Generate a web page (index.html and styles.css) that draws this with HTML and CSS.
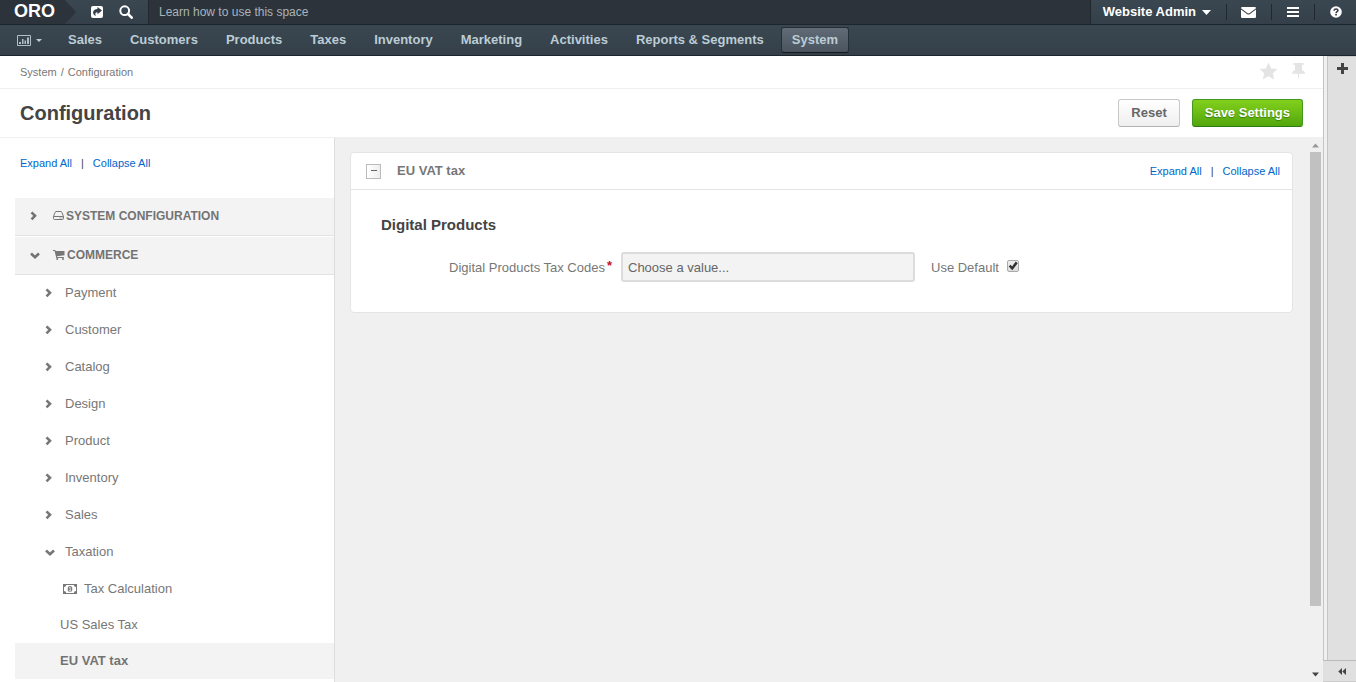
FILE: index.html
```html
<!DOCTYPE html>
<html lang="en">
<head>
<meta charset="utf-8">
<title>Configuration - System</title>
<link rel="stylesheet" href="styles.css">
</head>
<body>
<svg class="defs" aria-hidden="true">
  <symbol id="right" viewBox="0 0 10 12"><path d="M1.500 2.300 5 5.800 1.500 9.300" fill="none" stroke="currentColor" stroke-width="2.600"/></symbol>
  <symbol id="down" viewBox="0 0 10 12"><path d="M1 4.500 5 8.200 9 4.500" fill="none" stroke="currentColor" stroke-width="2.600"/></symbol>
</svg>
<header class="topbar">
  <a class="logo" href="#">ORO</a>
  <div class="tools">
    <button class="icon-btn" aria-label="Shortcuts"><svg width="12" height="12" viewBox="0 0 12 12"><rect width="12" height="12" rx="2" fill="#fff"/><path d="M6.500 1 11 4.500 6.500 8.200V6.200C4.500 6.200 3.800 7.200 4.800 10 .8 8.500 1.200 3 6.500 3z" fill="#333e48"/></svg></button>
    <button class="icon-btn" aria-label="Search"><svg width="14" height="14" viewBox="0 0 14 14" fill="none" stroke="#fff"><circle cx="5.700" cy="5.700" r="4.400" stroke-width="2"/><path d="m9 9 3.700 3.700" stroke-width="2.600" stroke-linecap="round"/></svg></button>
  </div>
  <a class="learn" href="#">Learn how to use this space</a>
  <div class="user">
    <button class="user-name">Website Admin <svg width="9" height="5" viewBox="0 0 9 5"><path d="M0 0h9L4.500 5z" fill="#fff"/></svg></button>
    <button class="user-btn mail" aria-label="Emails"><svg width="15" height="11" viewBox="0 0 15 11"><path d="M0 1.200Q0 0 1.200 0h12.600Q15 0 15 1.200L8.700 6Q7.500 6.900 6.300 6z" fill="#fff"/><path d="M0 2.600 6 7.100q1.500 1 3 0l6-4.500v7.200q0 1.200-1.200 1.200H1.200Q0 11 0 9.800z" fill="#fff"/></svg></button>
    <button class="user-btn" aria-label="Menu"><svg width="12" height="10" viewBox="0 0 12 10"><path d="M0 0h12v2H0zM0 4h12v2H0zM0 8h12v2H0z" fill="#fff"/></svg></button>
    <button class="user-btn" aria-label="Help"><svg width="12" height="12" viewBox="0 0 12 12"><circle cx="6" cy="6" r="5.800" fill="#fff"/><path d="M4 4.700C4.200 2.500 8 2.600 7.900 4.500 7.800 5.800 6.100 5.700 6.100 7.200" fill="none" stroke="#333e48" stroke-width="1.600"/><path d="M5.200 8h1.700v1.600H5.200z" fill="#333e48"/></svg></button>
  </div>
</header>
<nav class="nav">
  <a class="dash" href="#" aria-label="Dashboards"><svg width="14" height="11" viewBox="0 0 14 11"><path d="M.5.500h13v10H.5z" fill="none" stroke="#aebdc6"/><path d="M2 7h2v2H2zM5 4h1.500v5H5zM7.500 5.500H9V9H7.500zM10 2.500h2V9h-2z" fill="#aebdc6"/></svg><svg width="6" height="3" viewBox="0 0 6 3"><path d="M0 0h6L3 3z" fill="#bcccd5"/></svg></a>
  <a class="nav-link" href="#">Sales</a>
  <a class="nav-link" href="#">Customers</a>
  <a class="nav-link" href="#">Products</a>
  <a class="nav-link" href="#">Taxes</a>
  <a class="nav-link" href="#">Inventory</a>
  <a class="nav-link" href="#">Marketing</a>
  <a class="nav-link" href="#">Activities</a>
  <a class="nav-link" href="#">Reports &amp; Segments</a>
  <a class="nav-link active" href="#">System</a>
</nav>
<div class="shell">
  <main class="main">
    <div class="crumbs">
      <div class="path"><a href="#">System</a><span>/</span><span>Configuration</span></div>
      <div class="marks">
        <button class="icon-btn" aria-label="Favorite"><svg width="19" height="18" viewBox="0 0 19 18"><path d="m9.500.5 2.700 5.900 6.300.7-4.700 4.200 1.400 6.200-5.700-3.200-5.700 3.200 1.400-6.200L.5 7.100l6.300-.7z" fill="#e4e4e4"/></svg></button>
        <button class="icon-btn" aria-label="Pin"><svg width="13" height="18" viewBox="0 0 13 18"><path d="M1.500 1h10v2H10v5c2 .8 3 2 3 3.800H7.300L6.500 18l-.8-6.200H0C0 10 1 8.800 3 8V3H1.500z" fill="#e4e4e4"/></svg></button>
      </div>
    </div>
    <div class="titlebar">
      <h1>Configuration</h1>
      <button class="btn">Reset</button>
      <button class="btn save">Save Settings</button>
    </div>
    <div class="content">
      <aside class="tree">
        <div class="toggles"><a href="#">Expand All</a><span>|</span><a href="#">Collapse All</a></div>
        <a class="group" href="#"><svg class="arrow" width="10" height="12"><use href="#right"/></svg><svg width="11" height="10" viewBox="0 0 11 10"><path d="M.5 5.500 2.200 1.200Q2.400.5 3 .5h5q.6 0 .8.7l1.700 4.300v2q0 1-1 1h-8q-1 0-1-1zM.5 5.500h10M6.500 7h1M8.500 7h1" fill="none" stroke="#777"/></svg><span>SYSTEM CONFIGURATION</span></a>
        <a class="group" href="#"><svg class="arrow" width="10" height="12"><use href="#down"/></svg><svg width="12" height="10" viewBox="0 0 12 10" fill="#777"><path d="M0 0h2.200l.5 1H11.500v4.200L4 6.200l.2.900h6.600v1H3.300L1.600 1H0z"/><circle cx="4.200" cy="9" r="1"/><circle cx="10" cy="9" r="1"/></svg><span>COMMERCE</span></a>
        <a class="item" href="#"><svg width="10" height="12"><use href="#right"/></svg>Payment</a>
        <a class="item" href="#"><svg width="10" height="12"><use href="#right"/></svg>Customer</a>
        <a class="item" href="#"><svg width="10" height="12"><use href="#right"/></svg>Catalog</a>
        <a class="item" href="#"><svg width="10" height="12"><use href="#right"/></svg>Design</a>
        <a class="item" href="#"><svg width="10" height="12"><use href="#right"/></svg>Product</a>
        <a class="item" href="#"><svg width="10" height="12"><use href="#right"/></svg>Inventory</a>
        <a class="item" href="#"><svg width="10" height="12"><use href="#right"/></svg>Sales</a>
        <a class="item" href="#"><svg width="10" height="12"><use href="#down"/></svg>Taxation</a>
        <a class="leaf with-icon" href="#"><svg width="14" height="10" viewBox="0 0 14 10"><path fill-rule="evenodd" d="M0 0h14v10H0zM3.200 1Q3 2.800 1 3v4q2 .2 2.200 2h7.600q.2-1.800 2.200-2V3Q11 2.800 10.800 1z" fill="#777"/><ellipse cx="7" cy="5" rx="2.300" ry="2.900" fill="#777"/><path d="m6.200 3.800 1-.6v3.500M6 6.900h2.200" fill="none" stroke="#fff" stroke-width=".8"/></svg>Tax Calculation</a>
        <a class="leaf" href="#">US Sales Tax</a>
        <a class="leaf current" href="#">EU VAT tax</a>
      </aside>
      <div class="work">
        <section class="card">
          <div class="card-head">
            <button class="collapse" aria-label="Collapse section"></button>
            <h2>EU VAT tax</h2>
            <div class="toggles"><a href="#">Expand All</a><span>|</span><a href="#">Collapse All</a></div>
          </div>
          <div class="card-body">
            <h3>Digital Products</h3>
            <div class="field">
              <label class="name" for="codes">Digital Products Tax Codes<em>*</em></label>
              <input class="codes" id="codes" type="text" placeholder="Choose a value..." disabled>
              <label for="def">Use Default</label>
              <input class="check" id="def" type="checkbox" checked>
            </div>
          </div>
        </section>
        <div class="scroll" aria-hidden="true">
          <svg width="7" height="5" viewBox="0 0 7 5"><path d="M0 4.500 3.500.5 7 4.500z" fill="#999"/></svg>
          <div class="track"><div class="thumb"></div></div>
          <svg width="7" height="5" viewBox="0 0 7 5"><path d="M0 .5h7L3.500 4.500z" fill="#444"/></svg>
        </div>
      </div>
    </div>
  </main>
  <aside class="side">
    <div class="side-main"><button class="icon-btn" aria-label="Add widget"><svg width="11" height="11" viewBox="0 0 11 11"><path d="M4 0h3v4h4v3H7v4H4V7H0V4h4z" fill="#444"/></svg></button></div>
    <div class="side-foot"><button class="icon-btn" aria-label="Expand sidebar"><svg width="8" height="7" viewBox="0 0 8 7"><path d="M4 0v7L.3 3.500zM8 0v7L4.300 3.500z" fill="#444"/></svg></button></div>
  </aside>
</div>
</body>
</html>
```
FILE: styles.css
```css
* { box-sizing: border-box; }
body {
  margin: 0;
  height: 100vh;
  display: flex;
  flex-direction: column;
  overflow: hidden;
  font: 13px/18px "Liberation Sans", Arial, sans-serif;
  color: #777;
  background: #fff;
}
a { text-decoration: none; color: inherit; }
button { font: inherit; color: inherit; cursor: pointer; }
svg { flex: none; display: block; }
h1, h2, h3 { margin: 0; }
.defs { display: none; }
.icon-btn, .user-name, .user-btn { border: 0; padding: 0; background: none; display: flex; align-items: center; }

.topbar { flex: none; height: 25px; display: flex; background: #2c333b; border-bottom: 1px solid #1d252c; }
.logo {
  width: 76px;
  padding-left: 14px;
  font-size: 18px;
  line-height: 23px;
  font-weight: bold;
  color: #fff;
  background: #2c333b;
  clip-path: polygon(0 0, 65px 0, 100% 50%, 65px 100%, 0 100%);
  z-index: 1;
}
.tools {
  display: flex;
  gap: 16px;
  margin-left: -12px;
  padding: 0 15px 0 27px;
  background: linear-gradient(#3a4751, #343f49);
  border-right: 1px solid #20272e;
}
.learn { padding-left: 10px; line-height: 24px; font-size: 12px; color: #a9b3ba; }
.user { display: flex; margin-left: auto; padding-right: 14px; background: linear-gradient(#3a4751, #343f49); border-left: 1px solid #20272e; align-items: center; }
.user-name { gap: 6px; padding: 0 15px 0 12px; font-weight: bold; color: #fff; }
.user-btn { height: 16px; padding: 0 15px; border-left: 1px solid #20272e; }
.user-btn:last-child { padding-right: 0; }
.mail { padding: 0 15px 0 14px; }

.nav {
  flex: none;
  height: 31px;
  display: flex;
  align-items: center;
  gap: 6px;
  padding-left: 17px;
  background: linear-gradient(#3a4751, #343f49);
  border-bottom: 1px solid #1d252c;
}
.dash { display: flex; align-items: center; gap: 5px; margin-right: 9px; }
.nav-link { padding: 2px 10px 3px; border: 1px solid transparent; border-radius: 3px; font-weight: bold; color: #bcccd5; line-height: 19px; }
.active { background: linear-gradient(#606b77, #4a545e); border-color: #262f36; border-bottom-color: #14191d; }

.shell { flex: 1; min-height: 0; display: flex; }
.main { flex: 1; min-width: 0; display: flex; flex-direction: column; }
.crumbs { height: 33px; display: flex; align-items: center; justify-content: space-between; padding: 0 18px 0 20px; border-bottom: 1px solid #f0f0f0; font-size: 11px; }
.path { display: flex; gap: 4px; }
.marks { display: flex; gap: 14px; padding-bottom: 2px; }
.titlebar { height: 49px; display: flex; align-items: center; padding: 0 20px; border-bottom: 1px solid #f0f0f0; }
h1 { flex: 1; font-size: 20px; line-height: 24px; color: #444; }
.btn {
  height: 28px;
  margin-left: 12px;
  padding: 0 12px;
  border: 1px solid #c8c8c8;
  border-bottom-color: #b3b3b3;
  border-radius: 3px;
  background: linear-gradient(#fff, #efefef);
  font-weight: bold;
  color: #666;
}
.save { background: linear-gradient(#82d01c, #53a70d); border-color: #43981d; border-bottom-color: #2d7a10; color: #fff; text-shadow: 0 1px 1px #3d7d10; }

.content { flex: 1; min-height: 0; display: flex; }
.tree { flex: none; width: 335px; padding: 16px 0 0 15px; border-right: 1px solid #ddd; }
.toggles { display: flex; gap: 9px; font-size: 11px; color: #444; }
.toggles a { color: #06c; }
.tree .toggles { padding: 0 0 26px 5px; }
.group { height: 38px; display: flex; align-items: center; gap: 2px; padding: 0 0 2px 15px; background: #f3f3f3; border-bottom: 1px solid #e2e2e2; font-size: 12px; font-weight: bold; color: #737373; }
.group + .group { margin-top: 1px; }
.group .arrow { margin-right: 11px; }
.item { height: 37px; display: flex; align-items: center; gap: 10px; padding: 0 0 2px 30px; }
.leaf { height: 36px; display: flex; align-items: center; gap: 7px; padding-left: 45px; }
.with-icon { padding-left: 48px; }
.current { background: #f3f3f3; font-weight: bold; color: #737373; }

.work { flex: 1; min-width: 0; display: flex; align-items: flex-start; padding-left: 15px; background: #f0f0f0; }
.card { flex: 1; min-width: 0; margin: 14px 17px 0 0; background: #fff; border: 1px solid #e4e4e4; border-radius: 4px; }
.card-head { height: 37px; display: flex; align-items: center; padding: 0 12px 0 15px; border-bottom: 1px solid #e4e4e4; }
.collapse { width: 15px; height: 15px; padding: 0; margin-right: 16px; display: flex; align-items: center; justify-content: center; border: 1px solid #bbb; background: linear-gradient(90deg, #fff, #eee); }
.collapse::before { content: ""; width: 6px; height: 1px; margin-bottom: 1px; background: #666; }
h2 { flex: 1; font-size: 13px; line-height: 18px; }
.card-body { padding: 25px 30px 30px; }
h3 { font-size: 15px; line-height: 20px; color: #444; }
.field { display: flex; align-items: center; margin-top: 17px; }
.field label { padding-top: 1px; }
.name { width: 231px; margin-right: 9px; text-align: right; }
.name em { margin-left: 2px; font-style: normal; font-weight: bold; vertical-align: 2px; line-height: 1px; font-size: 13px; color: #c8102e; }
.codes { width: 294px; height: 30px; margin-right: 16px; padding: 0 5px; border: 2px solid #dcdcdc; border-radius: 3px; background: #f3f3f3; font: inherit; }
.codes::placeholder { color: #666; opacity: 1; }
.check { appearance: none; width: 12px; height: 12px; margin: 0 0 2px 8px; border: 1px solid #aaa; border-radius: 2px; background: linear-gradient(#eee, #ddd); }
.check:checked::before { content: ""; display: block; width: 10px; height: 10px; background: #333; clip-path: polygon(8% 55%, 26% 38%, 42% 55%, 78% 6%, 98% 22%, 44% 92%); }

.scroll { align-self: stretch; width: 13px; display: flex; flex-direction: column; align-items: center; padding: 5px 2px 5px 0; }
.track { flex: 1; width: 11px; margin: 4px 0; }
.thumb { height: 88%; background: #c1c1c1; }

.side { flex: none; width: 33px; display: flex; flex-direction: column; background: #f0f0f0; }
.side-main { flex: 1; display: flex; padding-left: 3px; border-left: 1px solid #c4c4c4; }
.side-main .icon-btn { flex: 1; align-items: flex-start; justify-content: center; padding-top: 6px; background: #e0e0e0; border-left: 1px solid #c4c4c4; border-top: 1px solid #ccc; }
.side-foot { height: 22px; display: flex; align-items: center; padding-left: 15px; background: #e0e0e0; border-top: 1px solid #bbb; border-bottom: 1px solid #ccc; }
```
